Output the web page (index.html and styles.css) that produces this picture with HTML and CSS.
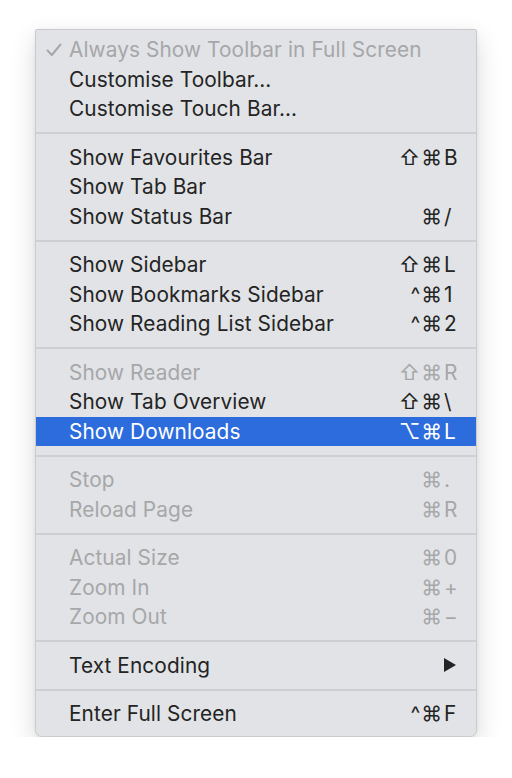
FILE: index.html
```html
<!DOCTYPE html>
<html lang="en">
<head>
    <meta charset="UTF-8" />
    <title>View menu</title>
    <link rel="stylesheet" href="styles.css">
</head>
<body>
    <div class="menu">
        <div class="item off">
            <span class="check"><svg width="16" height="14" viewBox="0 0 16 14"><path d="M1.5 7.5 L5.8 12 L14.5 1.5" fill="none" stroke="currentColor" stroke-width="2" stroke-linecap="round" stroke-linejoin="round"/></svg></span>
            <span class="label">Always Show Toolbar in Full Screen</span>
        </div>
        <div class="item"><span class="label">Customise Toolbar…</span></div>
        <div class="item"><span class="label">Customise Touch Bar…</span></div>
        <div class="sep"></div>
        <div class="item"><span class="label">Show Favourites Bar</span><span class="keys"><span class="mods">⇧⌘</span><span class="key">B</span></span></div>
        <div class="item"><span class="label">Show Tab Bar</span></div>
        <div class="item"><span class="label">Show Status Bar</span><span class="keys"><span class="mods">⌘</span><span class="key">/</span></span></div>
        <div class="sep"></div>
        <div class="item"><span class="label">Show Sidebar</span><span class="keys"><span class="mods">⇧⌘</span><span class="key">L</span></span></div>
        <div class="item"><span class="label">Show Bookmarks Sidebar</span><span class="keys"><span class="mods">^⌘</span><span class="key">1</span></span></div>
        <div class="item"><span class="label">Show Reading List Sidebar</span><span class="keys"><span class="mods">^⌘</span><span class="key">2</span></span></div>
        <div class="sep"></div>
        <div class="item off"><span class="label">Show Reader</span><span class="keys"><span class="mods">⇧⌘</span><span class="key">R</span></span></div>
        <div class="item"><span class="label">Show Tab Overview</span><span class="keys"><span class="mods">⇧⌘</span><span class="key">\</span></span></div>
        <div class="item active"><span class="label">Show Downloads</span><span class="keys"><span class="mods">⌥⌘</span><span class="key">L</span></span></div>
        <div class="sep"></div>
        <div class="item off"><span class="label">Stop</span><span class="keys"><span class="mods">⌘</span><span class="key">.</span></span></div>
        <div class="item off"><span class="label">Reload Page</span><span class="keys"><span class="mods">⌘</span><span class="key">R</span></span></div>
        <div class="sep"></div>
        <div class="item off"><span class="label">Actual Size</span><span class="keys"><span class="mods">⌘</span><span class="key">0</span></span></div>
        <div class="item off"><span class="label">Zoom In</span><span class="keys"><span class="mods">⌘</span><span class="key">+</span></span></div>
        <div class="item off"><span class="label">Zoom Out</span><span class="keys"><span class="mods">⌘</span><span class="key">−</span></span></div>
        <div class="sep"></div>
        <div class="item"><span class="label">Text Encoding</span><span class="arrow"><svg width="14" height="16" viewBox="0 0 14 16"><path d="M1 1 L13 8 L1 15 Z" fill="currentColor"/></svg></span></div>
        <div class="sep"></div>
        <div class="item"><span class="label">Enter Full Screen</span><span class="keys"><span class="mods">^⌘</span><span class="key">F</span></span></div>
    </div>
</body>
</html>
```

FILE: styles.css
```css
body{
    margin: 0;
    background: #fff;
    font-family: Inter, "DejaVu Sans", sans-serif;
}
.menu{
    width: 440px;
    margin: 29px 0 0 35px;
    padding: 5px 0 7px;
    background: #e1e3e6;
    border: 1px solid #c9cacc;
    border-radius: 2px 2px 7px 7px;
    box-shadow: 0 10px 26px rgba(0,0,0,.15), 0 1px 5px rgba(0,0,0,.06);
}
.item{
    height: 29.5px;
    display: flex;
    align-items: center;
    padding: 0 16px 0 33px;
    position: relative;
    color: #242424;
    font-size: 20.8px;
    letter-spacing: .1px;
}
.item.off{
    color: #a6a7a9;
}
.item.active{
    background: #2c6cdd;
    color: #fff;
}
.check{
    position: absolute;
    left: 10px;
    top: 8px;
    display: flex;
}
.label{
    flex: 1;
    white-space: nowrap;
}
.keys{
    display: flex;
}
.mods{
    width: 60px;
    text-align: right;
    letter-spacing: 1px;
}
.key{
    width: 16px;
    padding-left: 1px;
}
.arrow{
    display: flex;
    margin-right: 3px;
}
.sep{
    height: 19px;
    display: flex;
    align-items: center;
}
.sep::before{
    content: "";
    flex: 1;
    height: 2px;
    background: #cdd0d3;
}
```
